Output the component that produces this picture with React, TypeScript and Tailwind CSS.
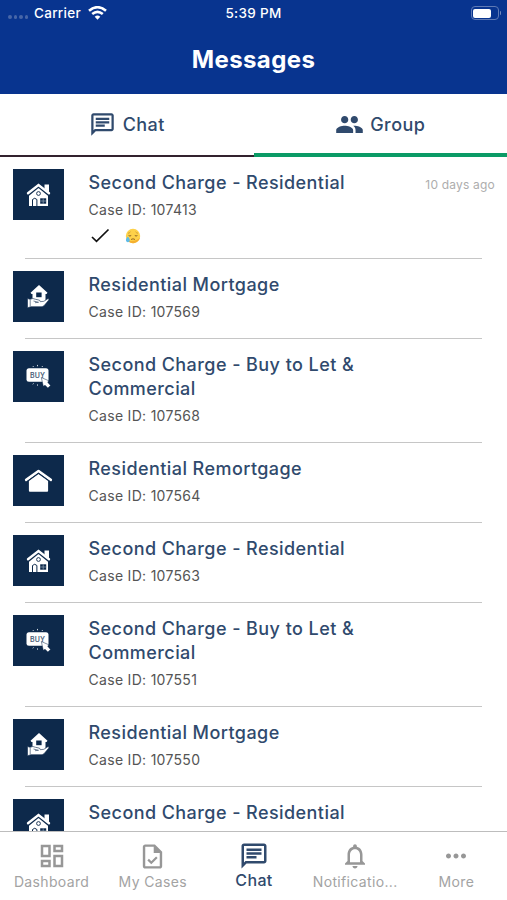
import {
  MdGroup,
  MdMoreHoriz,
  MdNotificationsNone,
  MdOutlineChat,
  MdOutlineDashboard,
} from "react-icons/md";

type CaseKind = "house" | "mortgage" | "buy" | "remortgage";

type CaseItem = {
  id?: string;
  title: string;
  kind: CaseKind;
  time?: string;
  reaction?: boolean;
};

const cases: CaseItem[] = [
  { id: "107413", title: "Second Charge - Residential", kind: "house", time: "10 days ago", reaction: true },
  { id: "107569", title: "Residential Mortgage", kind: "mortgage" },
  { id: "107568", title: "Second Charge - Buy to Let & Commercial", kind: "buy" },
  { id: "107564", title: "Residential Remortgage", kind: "remortgage" },
  { id: "107563", title: "Second Charge - Residential", kind: "house" },
  { id: "107551", title: "Second Charge - Buy to Let & Commercial", kind: "buy" },
  { id: "107550", title: "Residential Mortgage", kind: "mortgage" },
  { title: "Second Charge - Residential", kind: "house" },
];

function HouseIcon() {
  return (
    <svg viewBox="0 0 51 51" className="size-full">
      <path d="M31.500 15.500h4.500v8l-4.500-4z" fill="#fff" />
      <path d="M16 25l9.500-7.500L35 25v12H16z" fill="#fff" />
      <path d="M14.800 26.500L25.500 17.800l10.700 8.700" fill="none" stroke="#0d294b" strokeWidth="2" />
      <path d="M15 24.300L25.500 16.100l10.500 8.200" fill="none" stroke="#fff" strokeWidth="2.400" strokeLinecap="round" />
      <circle cx="25.500" cy="24.500" r="1.900" fill="#fff" stroke="#0d294b" strokeWidth=".9" />
      <path d="M19.500 37v-6.500q2.200-2.500 4.400 0V37" fill="#fff" stroke="#0d294b" strokeWidth="1" />
      <rect x="27.200" y="29.300" width="6" height="5.400" fill="#0d294b" />
      <path d="M30.200 29.300v5.400M27.200 32h6" stroke="#9aa9bc" strokeWidth=".7" />
    </svg>
  );
}

function MortgageIcon() {
  return (
    <svg viewBox="0 0 51 51" className="size-full">
      <path d="M17.500 21.800L26 14l8.500 7.800-1 1.200h-1v8h-13v-8h-1z" fill="#fff" />
      <rect x="23.200" y="21.500" width="5.400" height="4.700" fill="#0d294b" />
      <path
        d="M14.500 27.500l2.500.8q3-1.600 5.500 0l2.500.5q2.500.3 2.300 1.900l3.500-.4 4-2.500q1.800-.4 1 1.200l-4.600 5.500q-1.200 1.200-3 1.200H18l-3.500 1z"
        fill="#fff"
        stroke="#0d294b"
        strokeWidth=".6"
      />
      <path d="M20.500 30l5 1.300-3.500.4M17.200 28.500v7" fill="none" stroke="#3c5370" strokeWidth=".7" />
    </svg>
  );
}

function BuyIcon() {
  return (
    <svg viewBox="0 0 51 51" className="size-full">
      <rect x="13.500" y="17.300" width="22" height="13.500" rx="2.500" fill="#fff" />
      <text x="17" y="26.900" fontSize="7" fontWeight="600" letterSpacing=".1" fill="#4b5e78">
        BUY
      </text>
      <path d="M20 15.300l.4.400M24.500 14.300v.6M29.500 15.300l-.4.400M20 33l.4-.3M24.500 33.800v.5" stroke="#dfe5ec" strokeWidth=".9" strokeLinecap="round" />
      <path
        d="M28.300 26.500l7.300 3.200-.8 1.700 2.700 3-2.600 2.600-2.900-2.700-1.700 1z"
        fill="#fff"
        stroke="#0d294b"
        strokeWidth=".5"
      />
    </svg>
  );
}

function RemortgageIcon() {
  return (
    <svg viewBox="0 0 51 51" className="size-full">
      <path d="M13.200 24.900L25.500 16l12.300 8.900" fill="none" stroke="#fff" strokeWidth="2.600" strokeLinecap="round" strokeLinejoin="round" />
      <path d="M15.900 26l9.600-7 9.600 7v9.800q0 1-1 1H16.900q-1 0-1-1z" fill="#fff" />
      <path d="M13.500 26.800l12-8.600 12 8.600" fill="none" stroke="#0d294b" strokeWidth=".8" />
    </svg>
  );
}

const kindIcons = {
  house: HouseIcon,
  mortgage: MortgageIcon,
  buy: BuyIcon,
  remortgage: RemortgageIcon,
};

function SadFace() {
  return (
    <svg viewBox="0 0 16 16" className="size-4">
      <circle cx="8" cy="8" r="7.200" fill="#fdd149" />
      <path d="M2.500 12.600a7.200 7.200 0 0 0 12.500-3q-4 4.400-12.500 3z" fill="#f5b030" />
      <path d="M3 5.300q1.500-.2 2.500-1.500M13 5.300q-1.500-.2-2.500-1.500" fill="none" stroke="#b98328" strokeWidth=".6" />
      <path d="M3.600 7.500q1.300 1 2.600 0M9.800 7.500q1.300 1 2.600 0" fill="none" stroke="#7a5420" strokeWidth=".9" />
      <path d="M6 11.500q2-1.400 4 0" fill="none" stroke="#8a5c1e" strokeWidth=".9" />
      <path d="M2.800 8.500q3 3.200 1.600 5-1.500 1.300-3 0-1.400-1.800 1.400-5z" fill="#5dbbe8" />
    </svg>
  );
}

function TaskIcon() {
  return (
    <svg viewBox="0 0 24 24" className="size-[29px]">
      <path
        d="M14 2H6c-1.100 0-2 .9-2 2v16c0 1.100.9 2 2 2h12c1.100 0 2-.9 2-2V8zM18 20H6V4h7v5h5z"
        fill="currentColor"
      />
      <path d="M8.400 14.600l2.600 2.600 4.600-4.600" fill="none" stroke="currentColor" strokeWidth="1.800" />
    </svg>
  );
}

function StatusBar() {
  return (
    <div className="grid h-[26px] grid-cols-3 items-center text-[13.500px] font-medium tracking-[0.3px]">
      <div className="flex items-center pl-2">
        <div className="mt-2 flex gap-[2px]">
          <span className="size-[3.500px] rounded-full bg-[#4766a8]" />
          <span className="size-[3.500px] rounded-full bg-[#4766a8]" />
          <span className="size-[3.500px] rounded-full bg-[#4766a8]" />
          <span className="size-[3.500px] rounded-full bg-[#4766a8]" />
        </div>
        <span className="ml-[6px]">Carrier</span>
        <svg viewBox="0 0 19 14" className="ml-[7px] h-[14px] w-[19px]" fill="none" stroke="#fff" strokeWidth="2.600">
          <path d="M1 4.800q8.500-7.200 17 0" />
          <path d="M4.200 8q5.300-4.400 10.600 0" />
          <path d="M9.500 13.700L6.700 10.700q2.800-2.200 5.600 0z" fill="#fff" stroke="none" />
        </svg>
      </div>
      <span className="text-center">5:39 PM</span>
      <div className="flex items-center justify-end pr-[6px]">
        <div className="h-[14px] w-[28px] rounded-[4px] border border-[#5f7ab5] p-[1.500px]">
          <div className="h-full w-[18px] rounded-[2px] bg-white" />
        </div>
        <span className="ml-px h-1 w-[1.500px] rounded-r bg-[#7189bd]" />
      </div>
    </div>
  );
}

function CaseRow({ item }: { item: CaseItem }) {
  const Icon = kindIcons[item.kind];

  return (
    <li className="relative flex px-[13px] pt-3 after:absolute after:right-[25px] after:bottom-0 after:left-[25px] after:h-px after:bg-[#c6c6c6]">
      <div className="size-[51px] shrink-0 bg-[#0d294b]">
        <Icon />
      </div>
      <div className="ml-[24.500px] w-[290px] pb-4">
        <h2 className="pt-[1.800px] text-[18px] leading-[24.400px] font-[450] tracking-[0.43px] text-[#304a6d]">
          {item.title}
        </h2>
        {item.id && (
          <p className="mt-[3.700px] text-[14px] leading-[22px] tracking-[0.3px] text-[#555]">
            Case ID: {item.id}
          </p>
        )}
        {item.reaction && (
          <div className="flex h-[22px] items-center gap-[15px] pt-[9px] pl-[2px]">
            <svg viewBox="0 0 19 16" className="h-4 w-[19px]" fill="none" stroke="#111" strokeWidth="1.700">
              <path d="M1 9l4.500 4.300L17.500 1.500" />
            </svg>
            <SadFace />
          </div>
        )}
      </div>
      {item.time && (
        <span className="-mr-[1px] ml-auto pt-[8px] text-[12px] leading-4 tracking-[0.2px] whitespace-nowrap text-[#adadad]">
          {item.time}
        </span>
      )}
    </li>
  );
}

export default function App() {
  return (
    <div className="flex h-[900px] w-[507px] flex-col overflow-hidden bg-white font-['Inter',sans-serif]">
      <header className="h-[93.500px] shrink-0 bg-[#08348f] text-white">
        <StatusBar />
        <h1 className="pt-4 text-center text-[24px] leading-9 font-bold tracking-[0.4px]">Messages</h1>
      </header>

      <nav className="grid h-[63.500px] shrink-0 grid-cols-2 text-[18px] font-[450] tracking-[0.45px] text-[#304a6d]">
        <div className="flex items-center justify-center gap-[7px] border-b-[2.500px] border-[#32222e]">
          <MdOutlineChat className="size-[27px]" />
          <span>Chat</span>
        </div>
        <div className="flex items-center justify-center gap-[6px] border-b-4 border-[#0b9b66] pt-[2px]">
          <MdGroup className="size-[29px]" />
          <span>Group</span>
        </div>
      </nav>

      <ul className="min-h-0 flex-1 overflow-hidden">
        {cases.map((item, i) => (
          <CaseRow key={i} item={item} />
        ))}
      </ul>

      <footer className="grid h-[69px] shrink-0 grid-cols-5 border-t border-[#bdbdbd] bg-white pl-px text-[14px] tracking-[0.35px] text-[#a3a3a3]">
        <div className="flex flex-col items-center pt-[9px]">
          <MdOutlineDashboard className="size-[30px] text-[#979797]" />
          <span className="pt-px leading-5">Dashboard</span>
        </div>
        <div className="flex flex-col items-center pt-[9px]">
          <span className="flex h-[30px] items-center text-[#979797]">
            <TaskIcon />
          </span>
          <span className="pt-px leading-5">My Cases</span>
        </div>
        <div className="flex flex-col items-center pt-[9px] text-[#304a6d]">
          <MdOutlineChat className="size-[30px]" />
          <span className="text-[16px] leading-[19px] font-[450]">Chat</span>
        </div>
        <div className="flex flex-col items-center pt-[9px]">
          <MdNotificationsNone className="size-[30px] text-[#979797]" />
          <span className="pt-px leading-5">Notificatio...</span>
        </div>
        <div className="flex flex-col items-center pt-[9px]">
          <MdMoreHoriz className="size-[30px] text-[#979797]" />
          <span className="pt-px leading-5">More</span>
        </div>
      </footer>
    </div>
  );
}
